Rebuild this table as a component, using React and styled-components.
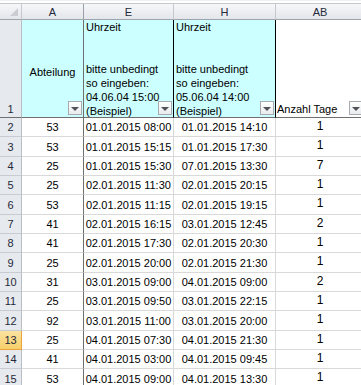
import React from "react";
import styled, { createGlobalStyle, css } from "styled-components";

const GlobalStyle = createGlobalStyle`
  html, body {
    margin: 0;
    padding: 0;
    background: #ffffff;
  }
  body {
    font-family: "Liberation Sans", Arial, sans-serif;
    font-size: 11px;
    color: #000;
  }
`;

// AB runs past the right edge of the window, like the screenshot
const COLS = "22px 62px 90px 102px 89px";

const Sheet = styled.div`
  width: 361px;
  height: 385px;
  overflow: hidden;
  background: #fff;
`;

const TopStrip = styled.div`
  width: 365px;
  height: 2px;
  background: #ffffff;
  border-bottom: 1px solid #c6cacf;
  border-top: 1px solid #eef0f2;
`;

const HeaderRow = styled.div`
  display: grid;
  grid-template-columns: ${COLS};
  height: 16px;
`;

const ColHead = styled.div`
  display: flex;
  align-items: center;
  justify-content: center;
  background: linear-gradient(#f6f7f9, #e3e6ea);
  border-right: 1px solid ${(p) => (p.$dark ? "#9aa0a8" : "#c5c9cf")};
  border-bottom: 1px solid #9ea4ac;
  color: #1f2a3a;
  font-size: 11px;
  box-sizing: border-box;
  position: relative;
`;

const CornerTriangle = styled.div`
  position: absolute;
  right: 3px;
  bottom: 3px;
  width: 0;
  height: 0;
  border-left: 8px solid transparent;
  border-bottom: 8px solid #c9cdd2;
`;

const Row = styled.div`
  display: grid;
  grid-template-columns: ${COLS};
  height: ${(p) => p.$h}px;
`;

const RowHead = styled.div`
  display: flex;
  align-items: ${(p) => (p.$bottom ? "flex-end" : "center")};
  justify-content: center;
  box-sizing: border-box;
  background: ${(p) =>
    p.$active ? "linear-gradient(#fbe3a1, #f7cf6b)" : "#e6e9ed"};
  border-right: 1px solid ${(p) => (p.$active ? "#eba23b" : "#b9bec5")};
  border-bottom: 1px solid ${(p) =>
    p.$freeze ? "#6f6f6f" : p.$active ? "#eba23b" : "#c8ccd2"};
  color: #1f2a3a;
  padding-bottom: ${(p) => (p.$bottom ? "1px" : "0")};
  line-height: 14px;
`;

const Cell = styled.div`
  position: relative;
  box-sizing: border-box;
  display: flex;
  overflow: hidden;
  white-space: pre;
  line-height: 14px;
  background: ${(p) => (p.$cyan ? "#ccffff" : "#ffffff")};
  border-right: 1px solid ${(p) => p.$right || "#d9d9d9"};
  border-bottom: 1px solid ${(p) => (p.$freeze ? "#6f6f6f" : "#d9d9d9")};
  ${(p) =>
    p.$align === "center" &&
    css`
      justify-content: center;
      align-items: center;
    `}
  ${(p) =>
    p.$align === "top" &&
    css`
      justify-content: flex-start;
      align-items: flex-start;
      padding-left: 2px;
    `}
  ${(p) =>
    p.$align === "bottom" &&
    css`
      justify-content: flex-start;
      align-items: flex-end;
      padding-left: 1px;
      padding-bottom: 1px;
    `}
  ${(p) =>
    p.$align === "raised" &&
    css`
      justify-content: center;
      align-items: flex-start;
      padding-top: 1px;
      font-size: 12px;
    `}
`;

const HeadText = styled.span`
  padding-top: ${(p) => p.$pt || 0}px;
`;

const FilterButton = styled.div`
  position: absolute;
  right: 1px;
  bottom: 2px;
  width: 14px;
  height: 14px;
  box-sizing: border-box;
  border: 1px solid #a7abb0;
  background: linear-gradient(#ffffff, #e9ebee);
  display: flex;
  align-items: center;
  justify-content: center;

  &::after {
    content: "";
    width: 0;
    height: 0;
    margin-top: 1px;
    border-left: 4px solid transparent;
    border-right: 4px solid transparent;
    border-top: 4px solid #505458;
  }
`;

const data = [
  [2, "53", "01.01.2015 08:00", "01.01.2015 14:10", "1"],
  [3, "53", "01.01.2015 15:15", "01.01.2015 17:30", "1"],
  [4, "25", "01.01.2015 15:30", "07.01.2015 13:30", "7"],
  [5, "25", "02.01.2015 11:30", "02.01.2015 20:15", "1"],
  [6, "53", "02.01.2015 11:15", "02.01.2015 19:15", "1"],
  [7, "41", "02.01.2015 16:15", "03.01.2015 12:45", "2"],
  [8, "41", "02.01.2015 17:30", "02.01.2015 20:30", "1"],
  [9, "25", "02.01.2015 20:00", "02.01.2015 21:30", "1"],
  [10, "31", "03.01.2015 09:00", "04.01.2015 09:00", "2"],
  [11, "25", "03.01.2015 09:50", "03.01.2015 22:15", "1"],
  [12, "92", "03.01.2015 11:00", "03.01.2015 20:00", "1"],
  [13, "25", "04.01.2015 07:30", "04.01.2015 21:30", "1"],
  [14, "41", "04.01.2015 03:00", "04.01.2015 09:45", "1"],
  [15, "53", "04.01.2015 09:00", "04.01.2015 13:30", "1"],
];

const header = (d) =>
  `Uhrzeit\n\n\nbitte unbedingt\nso eingeben:\n${d}\n(Beispiel)`;

// rows are ~19.33px tall at this zoom level: 19, 20, 19, 19, 20, ...
const rowHeight = (i) => (i % 3 === 1 ? 20 : 19);

const App = () => {
  return (
    <>
      <GlobalStyle />
      <Sheet>
        <TopStrip />
        <HeaderRow>
          <ColHead>
            <CornerTriangle />
          </ColHead>
          <ColHead $dark>A</ColHead>
          <ColHead>E</ColHead>
          <ColHead>H</ColHead>
          <ColHead>AB</ColHead>
        </HeaderRow>

        <Row $h={98}>
          <RowHead $bottom $freeze>
            1
          </RowHead>
          <Cell $cyan $align="center" $right="#6f6f6f" $freeze>
            <HeadText $pt={6}>Abteilung</HeadText>
            <FilterButton />
          </Cell>
          <Cell $cyan $align="top" $right="#000000" $freeze>
            {header("04.06.04 15:00")}
            <FilterButton />
          </Cell>
          <Cell $cyan $align="top" $right="#000000" $freeze>
            {header("05.06.04 14:00")}
            <FilterButton />
          </Cell>
          <Cell $align="bottom" $freeze>
            Anzahl Tage
            <FilterButton />
          </Cell>
        </Row>

        {data.map(([n, a, e, h, ab], i) => (
          <Row key={n} $h={rowHeight(i)}>
            <RowHead $active={n === 13}>{n}</RowHead>
            <Cell $align="center" $right="#6f6f6f">
              {a}
            </Cell>
            <Cell $align="center">{e}</Cell>
            <Cell $align="center">{h}</Cell>
            <Cell $align="raised">{ab}</Cell>
          </Row>
        ))}
      </Sheet>
    </>
  );
};

export default App;
